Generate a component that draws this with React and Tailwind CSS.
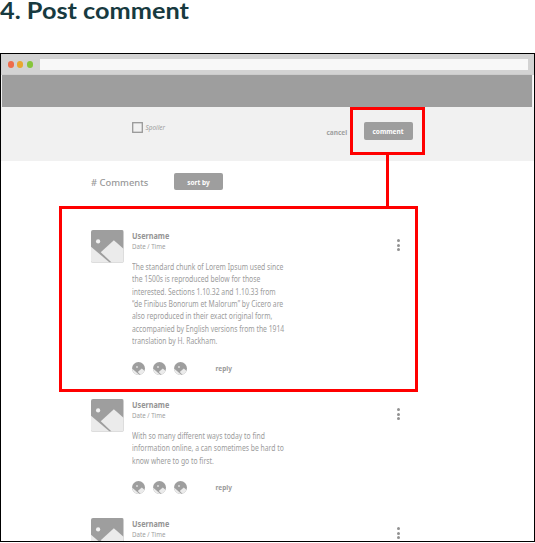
const comments = [
  [
    'The standard chunk of Lorem Ipsum used since',
    'the 1500s is reproduced below for those',
    'interested. Sections 1.10.32 and 1.10.33 from',
    '“de Finibus Bonorum et Malorum” by Cicero are',
    'also reproduced in their exact original form,',
    'accompanied by English versions from the 1914',
    'translation by H. Rackham.',
  ],
  [
    'With so many different ways today to find',
    'information online, a can sometimes be hard to',
    'know where to go to first.',
  ],
  [],
];

function Picture({ className }) {
  return (
    <svg viewBox="0 0 32 32" className={className} aria-hidden="true">
      <rect width="32" height="32" fill="#9e9e9e" />
      <path d="M0 16.5 18.3 32H0Z" fill="#ebebeb" />
      <path d="M9.6 21.8 22.5 10 32 18.4V32H20.3Z" fill="#ebebeb" />
      <circle cx="7" cy="11.3" r="2.1" fill="#f1f1f1" />
    </svg>
  );
}

function Avatar() {
  return (
    <svg viewBox="0 0 13 13" className="size-[13px] rounded-full" aria-hidden="true">
      <rect width="13" height="13" fill="#9e9e9e" />
      <path d="M0 6.4 7.6 13H0Z" fill="#ebebeb" />
      <path d="M5.8 10 9.8 6.6 13 9.2V13H8.6Z" fill="#ebebeb" />
      <circle cx="5" cy="5" r="0.9" fill="#e4e4e4" />
    </svg>
  );
}

function Comment({ lines }) {
  return (
    <article className="flex pl-[90px]">
      <Picture className="h-[32.5px] w-[32.5px] shrink-0 rounded-[2px]" />
      <div className="ml-[8.6px] w-[260px] shrink-0">
        <div className="h-[11px] origin-left scale-x-[0.91] text-[8px] leading-[11px] font-bold whitespace-nowrap text-[#949494]">
          Username
        </div>
        <div className="h-[19.7px] origin-left scale-x-[0.88] text-[7px] leading-[12px] whitespace-nowrap text-[#a0a0a0]">
          Date / Time
        </div>
        {lines.length > 0 && (
          <>
            <div className="origin-left scale-x-[0.85] text-[8px] leading-[12.4px] whitespace-nowrap text-[#9c9c9c]">
              {lines.map((line) => (
                <div key={line}>{line}</div>
              ))}
            </div>
            <div className="flex h-[51.5px] items-start gap-[7.8px] pt-[14px]">
              <Avatar />
              <Avatar />
              <Avatar />
              <span className="ml-[21px] text-[6.5px] leading-[13px] font-bold text-[#9a9a9a]">reply</span>
            </div>
          </>
        )}
      </div>
      <div className="ml-[4.9px] flex flex-col gap-[1.5px] pt-[9px]">
        <i className="size-[3px] rounded-full bg-[#929292]" />
        <i className="size-[3px] rounded-full bg-[#929292]" />
        <i className="size-[3px] rounded-full bg-[#929292]" />
      </div>
    </article>
  );
}

export default function App() {
  return (
    <main className="relative h-[543px] w-[535px] overflow-hidden bg-white font-['Noto_Sans','Open_Sans',sans-serif]">
      <h1 className="h-[53px] origin-left scale-x-[1.1] font-['Lato',sans-serif] text-[23px] leading-[20px] font-bold whitespace-nowrap text-[#173a40]">
        4. Post comment
      </h1>
      <section className="h-[489px] w-[535px] overflow-hidden border border-black bg-white">
        <header className="flex h-[21px] items-center bg-[#d3d3d3] pl-[6.5px]">
          <div className="flex gap-[3.3px]">
            <i className="size-[6.3px] rounded-full bg-[#ee6b4b]" />
            <i className="size-[6.3px] rounded-full bg-[#e9a72f]" />
            <i className="size-[6.3px] rounded-full bg-[#86c53b]" />
          </div>
          <div className="ml-[7px] h-[11px] w-[488px] bg-[#f8f8f8]" />
        </header>
        <div className="mr-[2px] ml-px h-[32px] bg-[#9e9e9e] shadow-[0_0_1px_#aaa]" />
        <div className="flex h-[54px] items-start bg-[#f1f1f1] pl-[131px]">
          <svg viewBox="0 0 11 11" className="mt-[15px] size-[11px]" aria-hidden="true">
            <rect x="0.7" y="0.7" width="9.6" height="9.6" fill="none" stroke="#989898" strokeWidth="1.3" />
          </svg>
          <span className="mt-[15px] ml-[2.5px] w-[181px] text-[6.4px] leading-[12px] text-[#a0a0a0] italic">Spoiler</span>
          <span className="mt-[20px] w-[37px] text-[6.5px] leading-[12px] font-bold text-[#a0a0a0]">cancel</span>
          <button className="mt-[15px] h-[18px] w-[49px] rounded-[2px] bg-[#9e9e9e] pt-px text-[6.5px] leading-[17px] font-bold text-white">
            comment
          </button>
        </div>
        <div className="flex h-[69px] items-start pl-[90px]">
          <h2 className="mt-[14px] w-[83px] text-[9.4px] leading-[15px] font-medium whitespace-nowrap text-[#999]"># Comments</h2>
          <button className="mt-[12px] h-[17px] w-[49px] rounded-[2px] bg-[#9e9e9e] pt-px text-[6.5px] leading-[17px] font-bold text-white">
            sort by
          </button>
        </div>
        {comments.map((lines, i) => (
          <Comment key={i} lines={lines} />
        ))}
      </section>
      <div className="absolute top-[107px] left-[350px] h-[48px] w-[75px] border-[3px] border-[#f00]" />
      <div className="absolute top-[155px] left-[386px] h-[51px] w-[3px] bg-[#f00]" />
      <div className="absolute top-[206px] left-[59px] h-[186px] w-[359px] border-[3px] border-[#f00]" />
    </main>
  );
}
